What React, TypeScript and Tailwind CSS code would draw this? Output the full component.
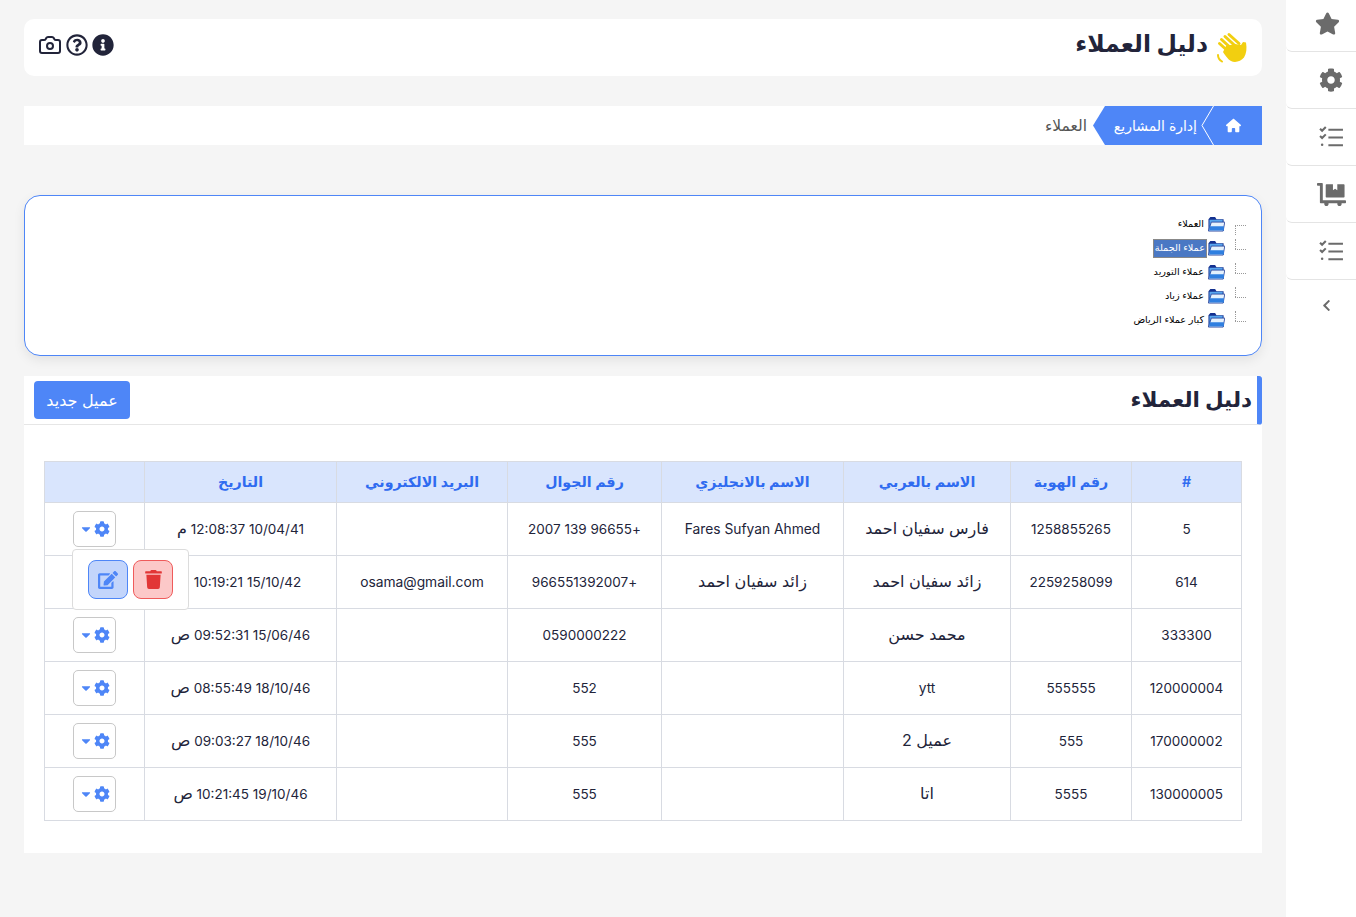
import React from "react";
import { FaStar, FaCog, FaEdit, FaTrash, FaInfoCircle, FaRegQuestionCircle, FaCaretDown, FaChevronLeft, FaDollyFlatbed } from "react-icons/fa";
import { FaHouse } from "react-icons/fa6";
import { Camera } from "lucide-react";

const F = "font-['Inter','DejaVu_Sans',sans-serif]";

function Checks() {
  return (
    <svg viewBox="0 0 24 24" className="w-[25px] h-[25px]" fill="none" stroke="#6b6b6b" strokeWidth="2">
      <path d="M1 3.500l2 2 3.500-3.500M1 10.500l2 2 3.500-3.500" />
      <circle cx="3" cy="19" r="1.200" fill="#6b6b6b" stroke="none" />
      <path d="M9 4.500h14M9 12h14M9 19.500h14" />
    </svg>
  );
}

function Wave() {
  return (
    <svg viewBox="0 0 32 32" className="w-8 h-8">
      <g stroke="#f2cf10" strokeLinecap="round" fill="none">
        <path d="M13 2.500l10 9M9 4.500l12 11M5.500 7.500l12 11M3.500 11.500l10 9" strokeWidth="3" />
        <path d="M2 23c0 3 1.500 5 4 6.500" strokeWidth="2" />
      </g>
      <path d="M10 14l9-2 6 1 2-3 3 .5c1 6 .5 11-2 15-3 4-9 5.500-13 3.500-3-1.500-6-6-8-9z" fill="#f2cf10" />
    </svg>
  );
}

function Folder() {
  return (
    <svg viewBox="0 0 18 16" className="w-[17px] h-4 shrink-0">
      <path d="M.5 3V15.500H16.500V3H9L7.500 .5H2.500z" fill="#14308f" />
      <path d="M1.500 3.500V14.500H15.500V3.500z" fill="#58a6ee" />
      <path d="M3.500 6H17.800L16 15.500H.5z" fill="#e4f1fd" stroke="#14308f" strokeWidth=".8" />
      <path d="M1.800 10.500H16.800V15H1.200z" fill="#2f7fe0" />
    </svg>
  );
}

const side = [
  <FaStar className="text-[25px] text-[#6b6b6b] ml-[12px] -mt-[5px]" />,
  <FaCog className="text-[24px] text-[#6b6b6b] ml-[20px]" />,
  <span className="ml-[20px]"><Checks /></span>,
  <FaDollyFlatbed className="text-[29px] text-[#6b6b6b] ml-[20px]" />,
  <span className="ml-[20px]"><Checks /></span>,
];

const tree = [
  ["العملاء", false],
  ["عملاء الجملة", true],
  ["عملاء التوريد", false],
  ["عملاء زياد", false],
  ["كبار عملاء الرياض", false],
] as const;

const headers = ["#", "رقم الهوية", "الاسم بالعربي", "الاسم بالانجليزي", "رقم الجوال", "البريد الالكتروني", "التاريخ", ""];
const widths = ["w-[110px]", "w-[121px]", "w-[167px]", "w-[182px]", "w-[154px]", "w-[171px]", "w-[192px]", "w-[100px]"];
const rows = [
  ["5", "1258855265", "فارس سفيان احمد", "Fares Sufyan Ahmed", "+96655 139 2007", "", "10/04/41 12:08:37 م"],
  ["614", "2259258099", "زائد سفيان احمد", "زائد سفيان احمد", "+966551392007", "osama@gmail.com", "15/10/42 10:19:21"],
  ["333300", "", "محمد حسن", "", "0590000222", "", "15/06/46 09:52:31 ص"],
  ["120000004", "555555", "ytt", "", "552", "", "18/10/46 08:55:49 ص"],
  ["170000002", "555", "عميل 2", "", "555", "", "18/10/46 09:03:27 ص"],
  ["130000005", "5555", "اتا", "", "555", "", "19/10/46 10:21:45 ص"],
];

function Cell({ c, shift }: { c: string; shift: boolean }) {
  if (/^[+0-9:/ ]+$/.test(c)) {
    return <span className={shift ? "text-[13.500px] ml-[14px]" : "text-[13.500px]"}>{c}</span>;
  }
  const stamp = c.match(/^([0-9:/ ]+ )([مص])$/);
  if (stamp) {
    return (
      <span className="text-[13.500px]">
        {stamp[1]}
        <span className="text-[16px]">{stamp[2]}</span>
      </span>
    );
  }
  if (/[\u0600-\u06FF]/.test(c)) return <span className="text-[16px]">{c}</span>;
  return <span>{c}</span>;
}

export default function App() {
  return (
    <div dir="rtl" className={`flex min-h-[917px] bg-[#f5f5f5] text-[#22243a] ${F}`}>
      <aside className="w-[70px] shrink-0 bg-white">
        {side.map((icon, i) => (
          <div key={i} className={`${i === 0 ? "h-[52px]" : "h-[57px]"} flex items-center justify-center border-b border-[#e4e4e4] rounded-bl-[6px]`}>
            {icon}
          </div>
        ))}
        <div className="h-[50px] flex items-center justify-center">
          <FaChevronLeft className="text-[13px] text-[#6b6b6b] ml-[10px]" />
        </div>
      </aside>

      <main className="w-[1238px] mr-[24px] pt-[19px]">
        <header className="h-[57px] bg-white rounded-[10px] flex items-center justify-between pr-[14px] pl-[14px]">
          <div className="flex items-center gap-[8px]">
            <Wave />
            <h1 className="text-[23.500px] font-bold leading-none -mt-[8px]">دليل العملاء</h1>
          </div>
          <div className="flex items-center gap-[4px] -mt-[6px]">
            <FaInfoCircle className="text-[22px] text-[#22243a]" />
            <FaRegQuestionCircle className="text-[22px] text-[#22243a]" />
            <Camera size={24} strokeWidth={2} className="text-[#22243a]" />
          </div>
        </header>

        <nav className="mt-[30px] h-[39px] bg-white flex items-stretch relative">
          <div className="w-[48px] pr-[10px] bg-[#4e86f7] text-white flex items-center justify-center">
            <FaHouse className="text-[15px]" />
          </div>
          <div className="w-[121px] pr-[17px] pb-[1px] bg-[#4e86f7] text-white text-[14px] flex items-center [clip-path:polygon(100%_0,12px_0,0_50%,12px_100%,100%_100%)]">
            إدارة المشاريع
          </div>
          <div className="flex items-center pr-[6px] text-[#555] text-[15.500px]">العملاء</div>
          <svg viewBox="0 0 13 39" className="absolute right-[48px] top-0 w-[13px] h-[39px]" fill="none" stroke="#fff" strokeWidth="1">
            <path d="M12.500 0L1 19.500L12.500 39" />
          </svg>
        </nav>

        <section className="mt-[50px] h-[161px] bg-white border border-[#4e86f7] rounded-[16px] shadow-[0_4px_12px_rgba(0,0,0,0.08)] pt-[16px] pr-[15px]">
          <ul className="font-['Liberation_Sans','DejaVu_Sans',sans-serif] text-[9.700px] text-black">
            {tree.map(([t, sel], i) => (
              <li key={i} className="h-[24px] flex items-center">
                <span className="w-[11px] h-[24px] shrink-0 relative">
                  <span className="absolute right-0 top-[13px] w-[11px] border-t border-dotted border-[#999]" />
                  <span className={`absolute left-0 w-0 h-[10px] border-l border-dotted border-[#999] ${i === 0 ? "top-[13px]" : "top-[3px]"}`} />
                </span>
                <span className="w-[10px]" />
                <Folder />
                <span className={sel ? "mr-[1px] px-[1px] h-[19px] flex items-center bg-[#4a78c4] text-white border border-[#888]" : "mr-[3px] px-[1px]"}>{t}</span>
              </li>
            ))}
          </ul>
        </section>

        <section className="mt-[20px] h-[477px] bg-white relative">
          <div className="h-[49px] border-b border-[#e6e6e6] flex items-center justify-between border-r-[5px] border-r-[#4e86f7] rounded-r-[3px] pr-[5px] pl-[10px]">
            <h2 className="text-[21.500px] font-bold -mt-[2px]">دليل العملاء</h2>
            <button className="w-[96px] h-[38px] bg-[#4e86f7] text-white rounded-[4px] text-[16px]">عميل جديد</button>
          </div>

          <div className="mr-[20px] mt-[36px] relative">
            <table className="w-[1197px] table-fixed border-collapse text-[13.800px] text-center">
              <thead>
                <tr className="h-[41px] bg-[#d9e5fd] text-[#2f6bf0]">
                  {headers.map((h, i) => (
                    <th key={i} className={`${widths[i]} border border-[#d8dbe2] font-semibold text-[14.200px] pb-[1px]`}>{h}</th>
                  ))}
                </tr>
              </thead>
              <tbody>
                {rows.map((r, i) => (
                  <tr key={i} className="h-[53px]">
                    {r.map((c, j) => (
                      <td key={j} className={`border border-[#d8dbe2] px-1 ${/[\u0600-\u06FF]/.test(c) ? "pb-[2px]" : ""}`}>
                        <Cell c={c} shift={i === 1 && j === 6} />
                      </td>
                    ))}
                    <td className="border border-[#d8dbe2]">
                      {i !== 1 && (
                        <button className="w-[43px] h-[36px] mx-auto border border-[#c8c8c8] rounded-[5px] flex items-center justify-center gap-[1px] bg-white">
                          <FaCog className="text-[16px] text-[#4e86f7]" />
                          <FaCaretDown className="text-[14px] text-[#4e86f7]" />
                        </button>
                      )}
                    </td>
                  </tr>
                ))}
              </tbody>
            </table>
            <div className="absolute right-[1053px] top-[88px] w-[117px] h-[61px] bg-white border border-[#dcdcdc] rounded-[4px] flex items-center justify-center gap-[5px]">
              <button className="w-[40px] h-[39px] rounded-[8px] bg-[#fcc8c8] border border-[#ef5b5b] flex items-center justify-center">
                <FaTrash className="text-[19px] text-[#e23636]" />
              </button>
              <button className="w-[40px] h-[39px] rounded-[8px] bg-[#c3d5fb] border border-[#4e86f7] flex items-center justify-center">
                <FaEdit className="text-[20px] text-[#4e86f7]" />
              </button>
            </div>
          </div>
        </section>
      </main>
    </div>
  );
}
